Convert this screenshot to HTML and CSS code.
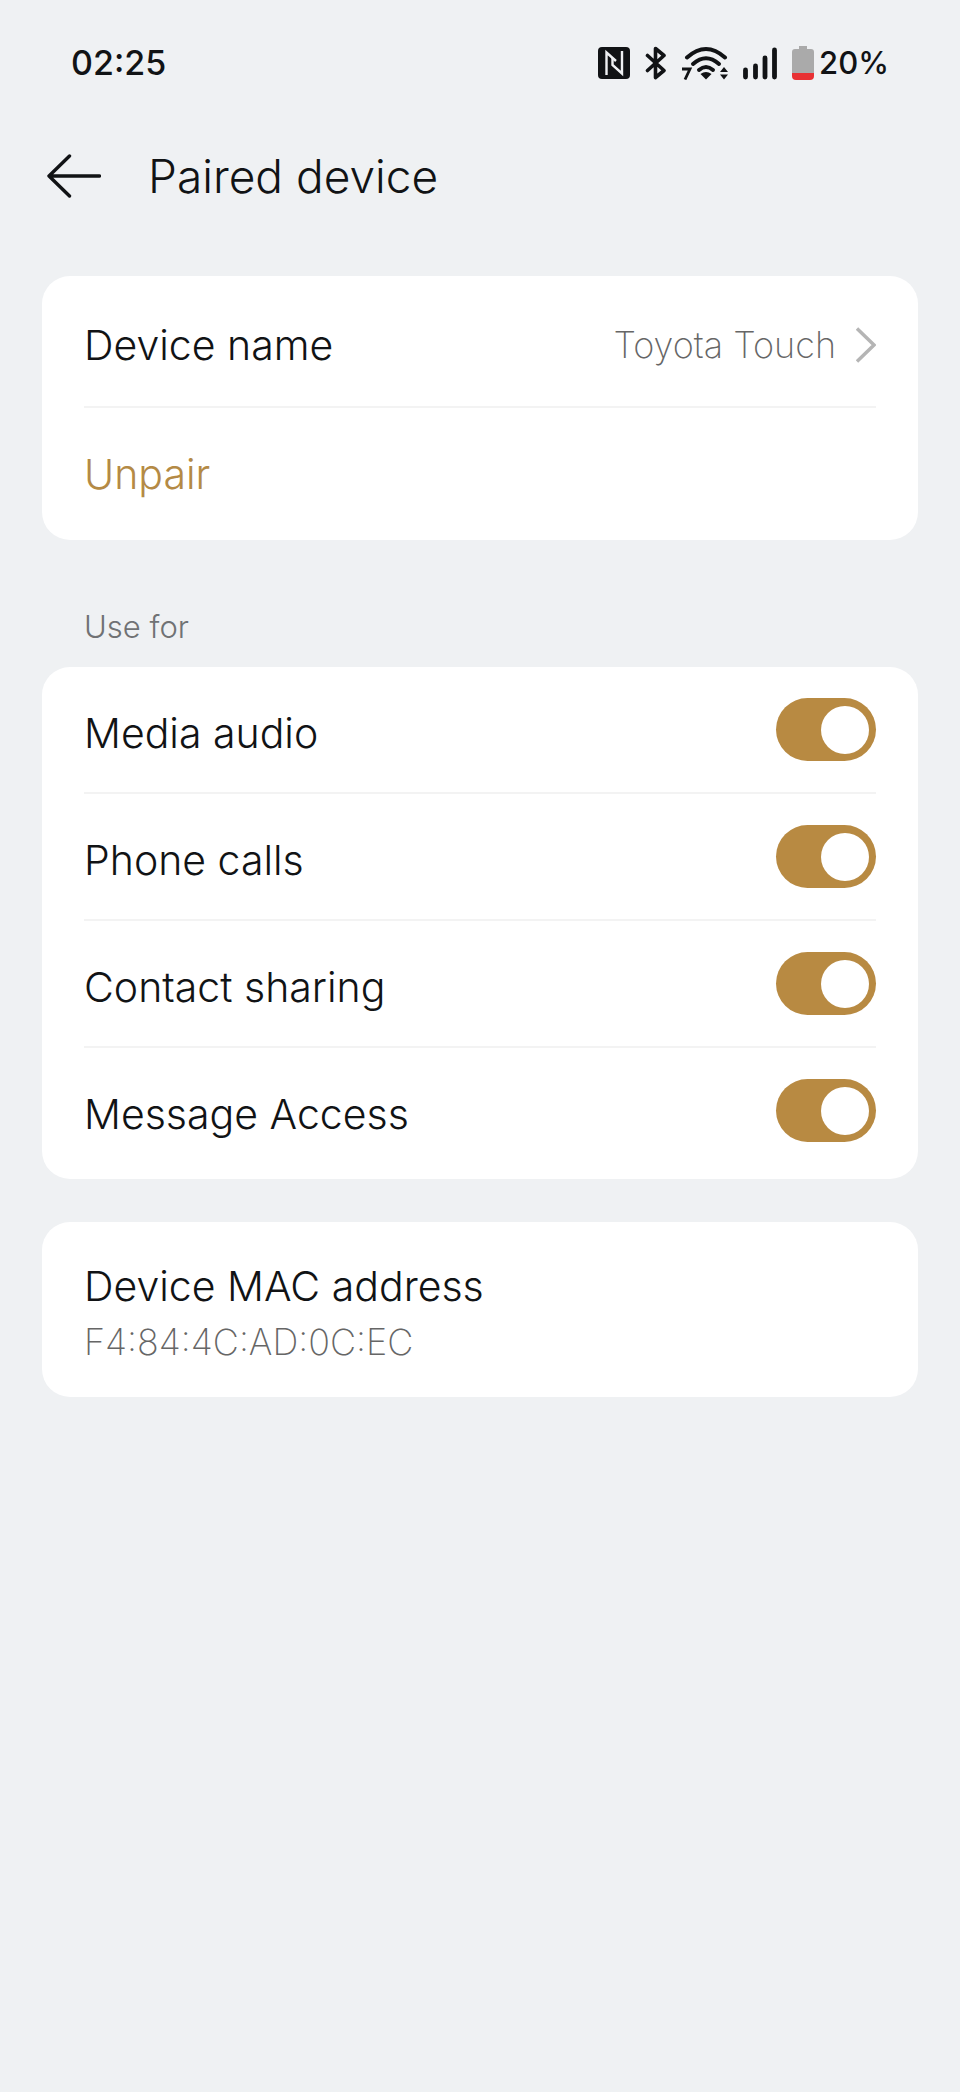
FILE: index.html
```html
<!DOCTYPE html>
<html lang="en">
<head>
<meta charset="utf-8">
<meta name="viewport" content="width=device-width, initial-scale=1">
<title>Paired device</title>
<link rel="stylesheet" href="styles.css">
</head>
<body>
<div class="status">
  <span>02:25</span>
  <div class="status-icons">
    <svg width="32" height="34" viewBox="0 0 32 34" aria-label="NFC"><rect y="1" width="32" height="32" rx="4" fill="#111315"/><path d="M8.500 29V6.500L18 15" fill="none" stroke="#eff1f3" stroke-width="2.400"/><path d="M24 5v22.500L14.500 19v-7" fill="none" stroke="#eff1f3" stroke-width="2.400"/></svg>
    <svg width="22" height="34" viewBox="0 0 22 34" aria-label="Bluetooth"><path d="M2.500 9.500L19 24.500l-8.500 7V2.500L19 9.500l-16.500 15" fill="none" stroke="#111315" stroke-width="3.600" stroke-linecap="round" stroke-linejoin="round"/></svg>
    <svg width="46" height="34" viewBox="0 0 46 34" aria-label="Wi-Fi 7"><g fill="none" stroke="#111315" stroke-width="4" stroke-linecap="round"><path d="M5 11.500Q24-5.500 43 11.500"/><path d="M11 18Q24 6.500 37 18"/><path d="M17 24Q24 18 31 24"/></g><path d="M18.500 28q5.500-4 11 0L24 33.500z" fill="#111315"/><path d="M0 23h8L3 33.500" fill="none" stroke="#111315" stroke-width="2.800"/><path d="M38 26h8l-4-5zM38 28.500h8l-4 5z" fill="#111315"/></svg>
    <svg width="34" height="34" viewBox="0 0 34 34" aria-label="Signal"><path d="M2.500 24v7M12.500 20v11M22 12v19M31.500 4v27" stroke="#111315" stroke-width="4.800" stroke-linecap="round"/></svg>
    <div class="battery"><svg width="22" height="34" viewBox="0 0 22 34" aria-hidden="true"><path d="M7 0h8v3h4q3 0 3 3v21H0V6q0-3 3-3h4z" fill="#aaa"/><path d="M0 27h22v3q0 4-4 4H4q-4 0-4-4z" fill="#e83133"/></svg><span>20%</span></div>
  </div>
</div>
<header class="header">
  <button class="back" aria-label="Back"><svg width="54" height="44" viewBox="0 0 54 44"><path d="M22.500 2L2 22l20.500 20M2 22h50.500" fill="none" stroke="#111315" stroke-width="3.400" stroke-linecap="round" stroke-linejoin="round"/></svg></button>
  <h1>Paired device</h1>
</header>
<main>
  <section class="card">
    <button class="row row-name"><span>Device name</span><span class="value">Toyota Touch <svg width="20" height="36" viewBox="0 0 20 36"><path d="M1 1.500L18 18 1 34.500" fill="none" stroke="#b5b5b5" stroke-width="3.400"/></svg></span></button>
    <button class="row unpair">Unpair</button>
  </section>
  <h2>Use for</h2>
  <section class="card toggles">
    <label class="row"><span>Media audio</span><input class="switch" type="checkbox" role="switch" checked></label>
    <label class="row"><span>Phone calls</span><input class="switch" type="checkbox" role="switch" checked></label>
    <label class="row"><span>Contact sharing</span><input class="switch" type="checkbox" role="switch" checked></label>
    <label class="row"><span>Message Access</span><input class="switch" type="checkbox" role="switch" checked></label>
  </section>
  <section class="card mac"><h3>Device MAC address</h3><p>F4:84:4C:AD:0C:EC</p></section>
</main>
</body>
</html>
```
FILE: styles.css
```css
* { box-sizing: border-box; }
body { margin: 0; background: #eff1f3; color: #111315; font: 300 41px/52px Inter, sans-serif; }
h1, h2, h3, p { margin: 0; font-weight: 300; }
button { border: 0; background: none; color: inherit; font: inherit; padding: 0; text-align: left; }
svg { display: block; flex: none; }
.status { display: flex; justify-content: space-between; align-items: center; height: 126px; padding: 0 71px; font-size: 34px; font-weight: 500; }
.status-icons { display: flex; align-items: center; gap: 15px; }
.battery { display: flex; align-items: center; gap: 5px; font-size: 31px; }
.header { display: flex; align-items: center; gap: 47px; padding: 20px 47px; }
h1 { font-size: 46px; line-height: 60px; }
main { padding: 50px 42px; }
.card { background: #fff; border-radius: 28px; padding: 0 42px; }
.row { display: flex; width: 100%; min-height: 132px; align-items: center; justify-content: space-between; border-bottom: 2px solid #f3f3f3; }
.row:last-child { border-bottom: 0; }
.row-name { padding-top: 8px; }
.value { display: flex; align-items: center; gap: 20px; font-size: 36px; font-weight: 200; color: #666; }
.unpair { color: #b48a45; }
h2 { font-size: 31px; line-height: 40px; padding: 67px 42px 20px; color: #707274; }
.toggles .row { min-height: 127px; }
.toggles .row:last-child { padding-bottom: 6px; min-height: 131px; }
.toggles span { padding-top: 7px; }
.switch { appearance: none; width: 100px; height: 63px; border-radius: 32px; background: #b88a42; padding: 7px; margin: 0; display: flex; align-items: center; justify-content: flex-end; }
.switch::before { content: ""; width: 48px; height: 48px; border-radius: 50%; background: #fff; }
.mac { margin-top: 43px; padding-top: 37px; padding-bottom: 26px; }
h3 { font-size: 41px; line-height: 54px; }
.mac p { font-size: 36px; line-height: 58px; font-weight: 200; color: #666; }
```
